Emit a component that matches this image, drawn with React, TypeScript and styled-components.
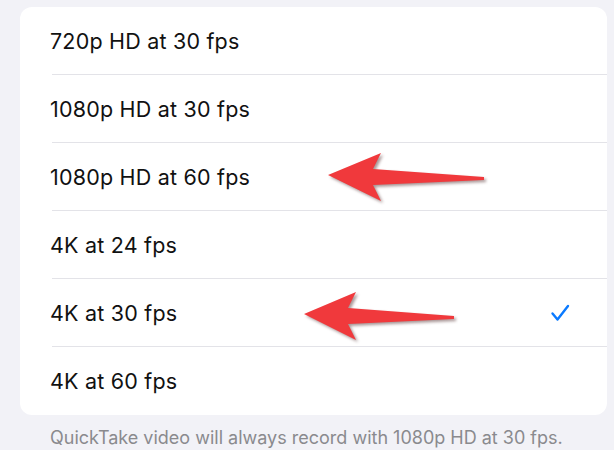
import React from 'react';
import styled, { createGlobalStyle } from 'styled-components';

const GlobalStyle = createGlobalStyle`
  html, body {
    margin: 0;
    padding: 0;
    background: #f2f2f7;
  }
  body {
    font-family: Inter, "Noto Sans", "Liberation Sans", sans-serif;
    -webkit-font-smoothing: antialiased;
  }
`;

const Page = styled.div`
  width: 614px;
  height: 450px;
  padding: 7px 7px 0 20px;
  box-sizing: border-box;
  background: #f2f2f7;
  overflow: hidden;
`;

const Card = styled.div`
  background: #ffffff;
  border-radius: 12px;
  overflow: hidden;
`;

const Row = styled.div<{ $last?: boolean }>`
  position: relative;
  height: 68px;
  display: flex;
  align-items: center;
  justify-content: space-between;
  padding: 0 30px 0 30px;
  box-sizing: border-box;

  &::after {
    content: '';
    display: ${p => (p.$last ? 'none' : 'block')};
    position: absolute;
    left: 32px;
    right: 0;
    bottom: 0;
    height: 1px;
    background: #e3e3e8;
  }
`;

const Label = styled.span`
  font-size: 21.5px;
  font-weight: 400;
  color: #111;
  letter-spacing: 0.2px;
`;

const Check = styled.svg`
  width: 20px;
  height: 20px;
  margin-right: 7px;
`;

const Arrow = styled.svg<{ $left: number; $top: number }>`
  position: absolute;
  left: ${p => p.$left}px;
  top: ${p => p.$top}px;
  overflow: visible;
  filter: drop-shadow(2px 2px 1.5px rgba(60, 20, 20, 0.45));
`;

const Footer = styled.p`
  margin: 12px 0 0 30px;
  font-size: 18px;
  color: #8a8a8e;
`;

const options = [
  '720p HD at 30 fps',
  '1080p HD at 30 fps',
  '1080p HD at 60 fps',
  '4K at 24 fps',
  '4K at 30 fps',
  '4K at 60 fps',
];

// coords relative to the row box
const RedArrow: React.FC<{ left: number; top: number; length: number; head: number }> = ({
  left,
  top,
  length,
  head,
}) => (
  <Arrow $left={left} $top={top} width={length} height={48} viewBox={`0 0 ${length} 48`}>
    <polygon
      points={`0,22 ${head},0 ${head - 8},16 ${length},24 ${length},27 ${head - 8},32 ${head},48`}
      fill="#f0393c"
    />
  </Arrow>
);

export default function App() {
  return (
    <Page>
      <GlobalStyle />
      <Card>
        {options.map((o, i) => (
          <Row key={o} $last={i === options.length - 1}>
            <Label>{o}</Label>
            {i === 2 && <RedArrow left={308} top={10} length={156} head={53} />}
            {i === 4 && <RedArrow left={284} top={13} length={150} head={52} />}
            {i === 4 && (
              <Check viewBox="0 0 20 20">
                <path
                  d="M2.5 10.5 L7.5 16.5 L18 3"
                  fill="none"
                  stroke="#0a7aff"
                  strokeWidth="2.4"
                  strokeLinecap="round"
                  strokeLinejoin="round"
                />
              </Check>
            )}
          </Row>
        ))}
      </Card>
      <Footer>QuickTake video will always record with 1080p HD at 30 fps.</Footer>
    </Page>
  );
}
